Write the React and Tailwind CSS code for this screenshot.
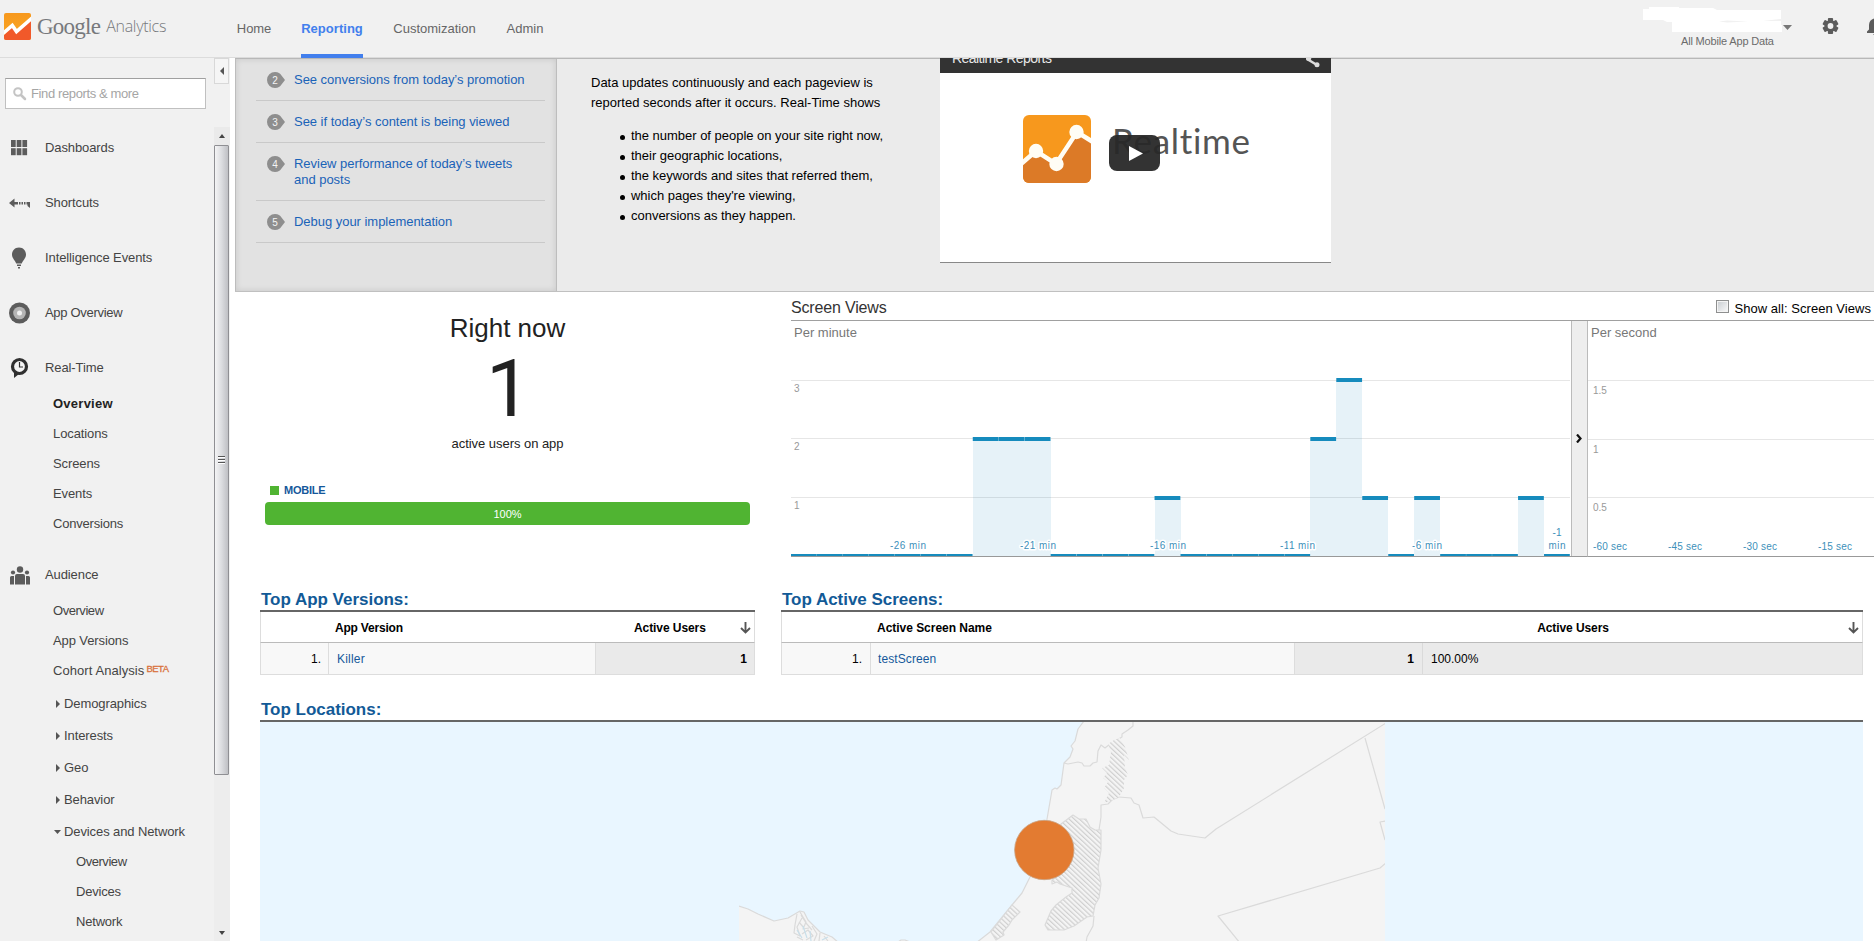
import React from "react";

const TOP_NAV = [
  { label: "Home", cls: "ml-[237px] w-[34px] text-[#666] tracking-[-0.1px]" },
  { label: "Reporting", cls: "ml-[30px] w-[62px] font-bold text-[#427fed] border-b-4 border-[#427fed] pt-1 tracking-[0.03px]" },
  { label: "Customization", cls: "ml-[30px] w-[83px] text-[#666]" },
  { label: "Admin", cls: "ml-[30px] w-[38px] text-[#666]" },
];

const STEPS = [
  { n: 2, text: "See conversions from today’s promotion" },
  { n: 3, text: "See if today’s content is being viewed" },
  { n: 4, text: "Review performance of today’s tweets and posts" },
  { n: 5, text: "Debug your implementation" },
];

const FACTS = [
  "the number of people on your site right now,",
  "their geographic locations,",
  "the keywords and sites that referred them,",
  "which pages they're viewing,",
  "conversions as they happen.",
];

const VIEWS = [0, 0, 0, 0, 0, 0, 0, 2, 2, 2, 0, 0, 0, 0, 1, 0, 0, 0, 0, 0, 2, 3, 1, 0, 1, 0, 0, 0, 1, 0];

function AnalyticsLogo() {
  return (
    <svg width="27" height="27" viewBox="0 0 27 27" className="shrink-0">
      <defs>
        <linearGradient id="lo" x1="0" y1="0" x2="0" y2="1">
          <stop offset="0" stopColor="#f7981d" />
          <stop offset="1" stopColor="#f9a825" />
        </linearGradient>
        <clipPath id="lc"><rect width="27" height="27" rx="2" /></clipPath>
      </defs>
      <g clipPath="url(#lc)">
        <rect width="27" height="27" fill="url(#lo)" />
        <path d="M0 22 L8.500 14 L12.500 19 L27 7 V27 H0Z" fill="#f1592a" />
        <path d="M-1 20.500 L8.300 12.500 L12.500 18.500 L28 5" fill="none" stroke="#fff" strokeWidth="3.600" />
      </g>
    </svg>
  );
}

function Header() {
  return (
    <header className="flex h-[58px] shrink-0 border-b border-[#dcdcdc] bg-[#f1f1f1]">
      <div className="flex h-[54px] w-0 items-start pt-[10px]">
        <div className="flex h-[32px] w-[200px] shrink-0 items-center pl-1">
          <AnalyticsLogo />
          <span className="ml-[6px] font-['Liberation_Serif',serif] text-[23px] leading-[27px] tracking-[-0.75px] text-[#77797c]">Google</span>
          <span className="ml-[6px] pt-px font-['Open_Sans',sans-serif] text-[16px] font-light leading-[27px] tracking-[-0.3px] text-[#77797c]">Analytics</span>
        </div>
      </div>
      <nav className="flex h-[58px] text-[13px]">
        {TOP_NAV.map((t) => (
          <div key={t.label} className={"flex items-center justify-center whitespace-nowrap " + t.cls}>
            <span>{t.label}</span>
          </div>
        ))}
      </nav>
      <div className="ml-auto flex h-[57px] w-[231px]">
        <div className="w-[139px] pt-[7px]">
          <svg width="139" height="26" viewBox="0 0 139 26" className="block">
            <path d="M0 2H6V0H36V1H70L74 3H138V12L120 14H138V18H139V25H29V15H24L20 13H0Z" fill="#fff" />
            <path d="M76 14.5L84 13.5L105 14.5L84 15.5Z" fill="#f1f1f1" />
          </svg>
          <div className="whitespace-nowrap pl-[38px] text-[11px] leading-[16px] tracking-[-0.17px] text-[#6b6b6b]">All Mobile App Data</div>
        </div>
        <svg width="92" height="57" viewBox="0 0 92 57" className="shrink-0">
          <path d="M1 25H10L5.500 30Z" fill="#777" />
          <g transform="translate(48.500 26)" fill="#5c5c5c">
            {[0, 60, 120].map((r) => (
              <rect key={r} x="-2.600" y="-8" width="5.200" height="16" rx="1" transform={`rotate(${r})`} />
            ))}
            <circle r="6" />
            <circle r="2.900" fill="#f1f1f1" />
          </g>
          <path d="M85 33V31.500L87 29.500V25C87 21.500 89 19.500 92 18.500V33Z M91 34H92V35Z" fill="#5c5c5c" />
        </svg>
      </div>
    </header>
  );
}

const ICONS = {
  dash: (
    <g fill="#5c5c5c">
      {[0, 1, 2].map((c) => [0, 1].map((r) => <rect key={c + "-" + r} x={11 + c * 5.7} y={4 + r * 8.2} width="4.700" height="7" />))}
    </g>
  ),
  short: (
    <g fill="#5c5c5c">
      <path d="M9 12L14.500 7.500V11H18V13.500H14.500V16.500Z" />
      <path d="M19 11H20.500V13.500H19ZM21.500 11H23V13.500H21.500ZM24 11H25.500V13.500H24ZM26.500 11H30V17L27.500 15V13.500H26.500Z" />
    </g>
  ),
  bulb: (
    <g fill="#5c5c5c">
      <path d="M19 1.500C23.500 1.500 26 5 26 8.500C26 12.500 22.500 14.500 21.800 17.500H16.200C15.500 14.500 12 12.500 12 8.500C12 5 14.500 1.500 19 1.500Z" />
      <path d="M17 18.500H21V20H17ZM18 21H20V22.500H18Z" />
    </g>
  ),
  app: (
    <g>
      <circle cx="19.500" cy="12" r="10.500" fill="#5c5c5c" />
      <circle cx="19.500" cy="12" r="6.300" fill="#b5b5b5" />
      <circle cx="19.500" cy="12" r="2.500" fill="#f1f1f1" />
    </g>
  ),
  time: (
    <g>
      <path d="M14 15V22L19 18Z" fill="#303030" />
      <circle cx="19.500" cy="10.500" r="7" fill="#f5f5f5" stroke="#303030" strokeWidth="3.200" />
      <path d="M19.500 6V11H23" fill="none" stroke="#303030" strokeWidth="1.200" />
    </g>
  ),
  people: (
    <g fill="#5c5c5c">
      <circle cx="20" cy="6.500" r="3.200" /><circle cx="13" cy="9.500" r="2.100" /><circle cx="27" cy="9.500" r="2.100" />
      <path d="M15 21.500V13Q15 11 17 11H23Q25 11 25 13V21.500ZM10 21.500V14.500Q10 13 11.500 13H14V21.500ZM30 21.500V14.500Q30 13 28.500 13H26V21.500Z" />
    </g>
  ),
};

function MainItem({ icon, label }) {
  return (
    <div className="flex h-[41px] items-center">
      <svg width="45" height="24" viewBox="0 0 45 24" className="shrink-0">{ICONS[icon]}</svg>
      <span>{label}</span>
    </div>
  );
}

function Sub({ children, deep }) {
  return <div className={"flex h-[30px] items-center " + (deep ? "pl-[76px] tracking-[-0.2px]" : "pl-[53px]")}>{children}</div>;
}

function Branch({ label, open }) {
  return (
    <div className={"flex items-center pl-[54px] " + (open ? "h-[31px]" : "h-[32px]")}>
      <svg width="10" height="8" viewBox="0 0 10 8" className="shrink-0">
        {open ? <path d="M0 2H7L3.500 6Z" fill="#555" /> : <path d="M2 0V8L6 4Z" fill="#555" />}
      </svg>
      <span>{label}</span>
    </div>
  );
}

function Sidebar() {
  return (
    <aside className="flex w-[230px] shrink-0 bg-[#f1f1f1] text-[13px] text-[#444]">
      <div className="w-[214px] pt-[20px] tracking-[-0.1px]">
        <div className="ml-[5px] flex h-[31px] w-[201px] items-center border border-[#c0c0c0] border-t-[#a0a0a0] bg-white pl-[7px] text-[#a5a5a5]">
          <svg width="14" height="14" viewBox="0 0 14 14">
            <circle cx="5" cy="5" r="3.800" fill="none" stroke="#c4c4c4" strokeWidth="2" />
            <path d="M8 8L12 12" stroke="#c4c4c4" strokeWidth="2.500" strokeLinecap="round" />
          </svg>
          <span className="ml-[4px] tracking-[-0.38px]">Find reports &amp; more</span>
        </div>
        <div className="mt-[18px]"><MainItem icon="dash" label="Dashboards" /></div>
        <div className="mt-[14px]"><MainItem icon="short" label="Shortcuts" /></div>
        <div className="mt-[14px]"><MainItem icon="bulb" label="Intelligence Events" /></div>
        <div className="mt-[14px] tracking-[-0.3px]"><MainItem icon="app" label="App Overview" /></div>
        <div className="mb-px mt-[14px]"><MainItem icon="time" label="Real-Time" /></div>
        <Sub><b className="tracking-[0.25px] text-[#222]">Overview</b></Sub>
        <Sub>Locations</Sub>
        <Sub>Screens</Sub>
        <Sub>Events</Sub>
        <Sub><span className="tracking-[-0.2px]">Conversions</span></Sub>
        <div className="mb-px mt-[15px]"><MainItem icon="people" label="Audience" /></div>
        <Sub><span className="tracking-[-0.45px]">Overview</span></Sub>
        <Sub>App Versions</Sub>
        <Sub><span className="tracking-[0.07px]">Cohort Analysis</span><span className="ml-[2px] pb-[4px] text-[9.5px] leading-none tracking-[-0.5px] text-[#d9713c] [-webkit-text-stroke:0.3px]">BETA</span></Sub>
        <div className="h-[2px]" />
        <Branch label="Demographics" />
        <Branch label="Interests" />
        <Branch label="Geo" />
        <Branch label="Behavior" />
        <Branch label="Devices and Network" open />
        <Sub deep><span className="tracking-[-0.45px]">Overview</span></Sub>
        <Sub deep>Devices</Sub>
        <Sub deep>Network</Sub>
      </div>
      <div className="flex w-[16px] flex-col">
        <div className="flex h-[26px] w-[15px] items-center justify-center border border-[#d8d8d8] bg-[#f5f5f5]">
          <svg width="4" height="8" viewBox="0 0 4 8"><path d="M4 0V8L0 4Z" fill="#555" /></svg>
        </div>
        <div className="mt-[43px] flex h-[18px] items-center justify-center bg-[#eaeaea]">
          <svg width="6" height="4" viewBox="0 0 6 4"><path d="M0 4H6L3 0Z" fill="#444" /></svg>
        </div>
        <div className="flex h-[630px] w-[15px] flex-col items-center justify-center gap-px rounded-[1px] border border-[#8f8f93] bg-linear-to-r from-[#f4f4f5] via-[#dcdde0] to-[#bfc0c4]">
          {[0, 1, 2].map((i) => <span key={i} className="h-[2px] w-[7px] border-b border-white bg-[#555]" />)}
        </div>
        <div className="flex grow items-end justify-center bg-[#ededed] pb-[6px]">
          <svg width="6" height="4" viewBox="0 0 6 4"><path d="M0 0H6L3 4Z" fill="#444" /></svg>
        </div>
      </div>
    </aside>
  );
}

function Step({ n, text }) {
  return (
    <li className="flex border-b border-[#c9c9c9] pb-[12px] pl-[11px] pt-[13px] leading-[16px]">
      <span className="relative mr-[9px] h-[16px] w-[18px] shrink-0 text-center">
        <svg width="18" height="16" viewBox="0 0 18 16" className="absolute left-0 top-0">
          <path d="M8 0C11.500 0 13 1.500 14.500 3.500L18 8L14.500 12.500C13 14.500 11.500 16 8 16A8 8 0 0 1 8 0Z" fill="#8e8e8e" />
        </svg>
        <span className="relative block w-[16px] text-[10px] leading-[17px] text-[#f4f4f4]">{n}</span>
      </span>
      <span className="w-[235px] tracking-[-0.03px] text-[#1a63b8]">{text}</span>
    </li>
  );
}

function Video() {
  return (
    <div className="ml-auto mr-[543px] flex h-[205px] w-[391px] flex-col border-b border-[#888] bg-white">
      <div className="flex h-[15px] shrink-0 justify-between overflow-hidden bg-[#333] pl-[12px] pr-[11px] text-[14px] text-[#e8e8e8]">
        <span className="relative -top-[10px] leading-[20px] tracking-[-0.55px]">Realtime Reports</span>
        <svg width="14" height="10" viewBox="0 0 14 10">
          <path d="M1 1L11 7" stroke="#ddd" strokeWidth="2.500" />
          <circle cx="2.500" cy="0" r="2.800" fill="#ddd" /><circle cx="11" cy="6.700" r="2.500" fill="#ddd" />
        </svg>
      </div>
      <div className="relative flex pl-[83px] pt-[42px]">
        <svg width="68" height="68" viewBox="0 0 68 68" className="shrink-0">
          <defs><clipPath id="vc"><rect width="68" height="68" rx="6" /></clipPath></defs>
          <g clipPath="url(#vc)">
            <rect width="68" height="68" fill="#f7981d" />
            <path d="M0 47L13 36L33 49L54 17L68 26V68H0Z" fill="#dc7a27" />
            <path d="M-2 49L13 36L33 49L54 17L70 27" fill="none" stroke="#fffdf5" strokeWidth="4.500" />
            <g fill="#fffdf5"><circle cx="13" cy="36" r="7.200" /><circle cx="33.500" cy="49" r="7.200" /><circle cx="53.500" cy="17" r="7.200" /></g>
          </g>
        </svg>
        <span className="ml-[21px] mt-[1px] font-['Lato',sans-serif] text-[35px] leading-[48px] tracking-[0.7px] text-[#555]">Realtime</span>
        <div className="absolute left-[169px] top-[62px] flex h-[36px] w-[51px] items-center justify-center rounded-[8px] bg-[#282828]/95">
          <svg width="14" height="15" viewBox="0 0 14 15" className="ml-[2px]"><path d="M0 0L14 7.500L0 15Z" fill="#fff" /></svg>
        </div>
      </div>
    </div>
  );
}

function Intro() {
  return (
    <section className="ml-[5px] flex h-[234px] shrink-0 border-b border-t border-b-[#c0c0c0] border-t-[#b8b8b8] bg-[#ebebeb] text-[13px]">
      <div className="w-[322px] shrink-0 border-x border-[#bdbdbd] bg-[#e2e2e2] pl-[20px] pr-[11px] shadow-[inset_0_0_6px_rgba(0,0,0,0.12)]">
        <ul>{STEPS.map((s) => <Step key={s.n} {...s} />)}</ul>
      </div>
      <div className="ml-[34px] w-[320px] shrink-0 pt-[14px] leading-[20px] text-black">
        <p className="whitespace-nowrap">Data updates continuously and each pageview is<br />reported seconds after it occurs. Real-Time shows</p>
        <ul className="mt-[13px] tracking-[-0.02px]">
          {FACTS.map((f) => (
            <li key={f} className="flex items-center whitespace-nowrap pl-[29px]">
              <span className="mr-[6px] mt-[2px] h-[5px] w-[5px] rounded-full bg-black" />{f}
            </li>
          ))}
        </ul>
      </div>
      <div className="-mt-px flex grow"><Video /></div>
    </section>
  );
}

function RightNow() {
  return (
    <div className="w-[561px] shrink-0">
      <div className="ml-[35px] flex w-[485px] flex-col pt-[20px] text-[#222]">
        <div className="text-center text-[26px] leading-[32px]">Right now</div>
        <div className="mt-[2px] pl-[2px] text-center font-['Roboto',sans-serif] text-[80px] leading-[86px]">1</div>
        <div className="mt-[2px] text-center text-[13px] leading-[20px] tracking-[-0.04px]">active users on app</div>
        <div className="mt-[27px] flex h-[18px] items-center pl-[5px] text-[11px] font-bold text-[#15589b]">
          <span className="mr-[5px] h-[9px] w-[9px] bg-[#50b432]" /><span className="tracking-[-0.25px]">MOBILE</span>
        </div>
        <div className="mt-[3px] flex h-[23px] items-center justify-center rounded-[4px] bg-[#50b432] pt-px text-[11px] text-white">100%</div>
      </div>
    </div>
  );
}

function MinuteChart() {
  const step = 779 / 30;
  const y = (v) => 235 - v * 58.700;
  return (
    <svg width="781" height="236" viewBox="0 0 781 236" className="shrink-0 font-['Liberation_Sans',Arial,sans-serif]">
      {[59, 117, 176].map((v) => <rect key={v} x="0" y={v} width="779" height="1" fill="#e6e6e6" />)}
      {VIEWS.map((v, i) => v > 0 && <rect key={i} x={i * step} y={y(v)} width={step} height={235 - y(v)} fill="#1a8bbd" fillOpacity="0.110" shapeRendering="crispEdges" />)}
      {VIEWS.map((v, i) => (
        <rect key={i} x={i * step} y={v ? Math.floor(y(v)) - 1 : 233} width={step - 0.2} height={v ? 4 : 2} fill="#168bbd" />
      ))}
      <rect x="0" y="235" width="781" height="1" fill="#999" />
      <g fontSize="10" fill="#999">
        <text x="3" y="71">3</text><text x="3" y="129">2</text><text x="3" y="188">1</text>
      </g>
      <g fontSize="10" fill="#3d8fba" textAnchor="middle" stroke="#fff" strokeWidth="3" paintOrder="stroke" strokeLinejoin="round">
        <text x="117" y="228" textLength="36">-26 min</text>
        <text x="247" y="228" textLength="36">-21 min</text>
        <text x="377" y="228" textLength="36">-16 min</text>
        <text x="506.500" y="228" textLength="35">-11 min</text>
        <text x="636" y="228" textLength="30">-6 min</text>
        <text x="766" y="215">-1</text>
        <text x="766" y="228" textLength="17">min</text>
      </g>
    </svg>
  );
}

function SecondChart() {
  return (
    <svg width="286" height="236" viewBox="0 0 286 236" className="shrink-0 font-['Liberation_Sans',Arial,sans-serif]">
      {[59, 118, 176].map((v) => <rect key={v} x="0" y={v} width="286" height="1" fill="#e6e6e6" />)}
      <rect x="0" y="235" width="286" height="1" fill="#999" />
      <g fontSize="10" fill="#999">
        <text x="5" y="73">1.5</text><text x="5" y="132">1</text><text x="5" y="190">0.5</text>
      </g>
      <g fontSize="10" fill="#3d8fba">
        <text x="5" y="229" textLength="34">-60 sec</text>
        <text x="80" y="229" textLength="34">-45 sec</text>
        <text x="155" y="229" textLength="34">-30 sec</text>
        <text x="230" y="229" textLength="34">-15 sec</text>
      </g>
    </svg>
  );
}

function ScreenViews() {
  return (
    <div className="w-[1083px] shrink-0 overflow-hidden">
      <div className="flex h-[29px] items-center border-b border-[#a0a0a0]">
        <span className="pt-[4px] text-[16px] tracking-[-0.17px] text-[#333]">Screen Views</span>
        <span className="ml-auto mr-[6px] mt-px h-[13px] w-[13px] border border-[#8e8f8f] bg-linear-to-br from-[#c8ccd0] to-[#fafafa] shadow-[inset_0_0_0_1px_#f4f4f4]" />
        <span className="mr-[3px] mt-[6px] whitespace-nowrap text-[13px] tracking-[0.04px] text-black">Show all: Screen Views</span>
      </div>
      <div className="flex h-[236px] text-[13px] leading-[16px] text-[#777]">
        <div className="relative w-[781px]">
          <MinuteChart />
          <span className="absolute left-[3px] top-[4px]">Per minute</span>
        </div>
        <div className="-ml-px flex w-[17px] items-center justify-center border-x border-b border-[#bbb] border-b-[#999] bg-[#eee]">
          <svg width="6" height="9" viewBox="0 0 6 9" className="mr-px"><path d="M1 0.500L4.500 4.500L1 8.500" fill="none" stroke="#111" strokeWidth="2.200" /></svg>
        </div>
        <div className="relative w-[286px]">
          <SecondChart />
          <span className="absolute left-[3px] top-[4px]">Per second</span>
        </div>
      </div>
    </div>
  );
}

function DownArrow() {
  return (
    <svg width="11" height="12" viewBox="0 0 11 12" className="shrink-0">
      <path d="M5.500 0V10.500M1 6L5.500 10.500L10 6" fill="none" stroke="#555" strokeWidth="1.900" />
    </svg>
  );
}

function Title({ children }) {
  return <h2 className="h-[20px] whitespace-nowrap pl-[1px] text-[17px] font-bold leading-[20px] tracking-[-0.02px] text-[#125a97]">{children}</h2>;
}

function Tables() {
  return (
    <div className="ml-[30px] mt-[33px] flex shrink-0 text-[12px] text-black">
      <div className="w-[495px]">
        <Title>Top App Versions:</Title>
        <div className="border-t-2 border-[#666]">
          <div className="flex h-[31px] items-center border-x border-b border-x-[#ddd] border-b-[#bbb] pt-px font-bold">
            <span className="w-[299px] pl-[74px] tracking-[-0.2px]">App Version</span>
            <span className="grow pl-[74px] tracking-[-0.08px]">Active Users</span>
            <span className="mr-[3px]"><DownArrow /></span>
          </div>
          <div className="flex h-[32px] border border-t-0 border-[#ddd] bg-[#f8f8f8] leading-[32px]">
            <span className="w-[68px] border-r border-[#ddd] pr-[7px] text-right">1.</span>
            <span className="w-[267px] border-r border-[#ddd] pl-[8px] tracking-[0.2px] text-[#15589b]">Killer</span>
            <b className="grow bg-[#eaeaea] pr-[7px] text-right">1</b>
          </div>
        </div>
      </div>
      <div className="ml-[26px] w-[1082px]">
        <Title>Top Active Screens:</Title>
        <div className="border-t-2 border-[#666]">
          <div className="flex h-[31px] items-center border-x border-b border-x-[#ddd] border-b-[#bbb] pt-px font-bold">
            <span className="w-[512px] pl-[95px] tracking-[-0.03px]">Active Screen Name</span>
            <span className="grow pl-[4px] text-center tracking-[-0.08px]">Active Users</span>
            <span className="mr-[3px]"><DownArrow /></span>
          </div>
          <div className="flex h-[32px] border border-t-0 border-[#ddd] bg-[#eaeaea] leading-[32px]">
            <span className="w-[89px] border-r border-[#ddd] bg-[#f8f8f8] pr-[8px] text-right">1.</span>
            <span className="w-[424px] border-r border-[#ddd] bg-[#f8f8f8] pl-[7px] tracking-[0.1px] text-[#15589b]">testScreen</span>
            <b className="w-[128px] border-r border-[#dadada] pr-[8px] text-right">1</b>
            <span className="pl-[8px]">100.00%</span>
          </div>
        </div>
      </div>
    </div>
  );
}

function Locations() {
  return (
    <div className="ml-[30px] mt-[25px] w-[1603px] shrink-0">
      <Title>Top Locations:</Title>
      <div className="border-t-2 border-[#666] bg-[#e9f6ff]">
        <svg width="1603" height="220" viewBox="260 722 1603 220" className="block">
          <defs>
            <pattern id="hatch" width="3.500" height="3.500" patternUnits="userSpaceOnUse" patternTransform="rotate(-47)">
              <rect width="3.500" height="3.500" fill="#f4f4f4" /><rect width="1.200" height="3.500" fill="#cfcfcf" />
            </pattern>
            <clipPath id="land"><rect x="739" y="722" width="646" height="220" /></clipPath>
          </defs>
          <g clipPath="url(#land)" stroke="#dadada" strokeWidth="1.200" strokeLinejoin="round" fill="none">
            <path fill="#f4f4f4" d="M1084 721L1078 729L1075 741L1071 746L1073 749L1070 757L1064 763L1061 785L1057 789L1055 788L1052 790L1046 825L1038 860L1030 877L1022 893L1012 905L990 932L976 943H1390V720Z" />
            <path fill="#f4f4f4" d="M735 904L739 906L748 909L758 914L774 921L788 918L800 911L804 912L808 920L820 932L832 937L839 943H735Z" />
            <path fill="#f4f4f4" d="M898 942L901 940H905L910 942" />
            <path d="M1064 763L1068 764L1078 762L1082 763L1084 766L1090 766L1093 763L1097 762L1098 751L1101 745L1105 748L1110 744L1115 741L1122 737L1122 734L1128 730L1133 726V721" />
            <path d="M1119 797L1131 798L1134 803L1139 805L1143 818L1154 817L1171 831L1178 834L1205 838L1216 829L1386 723" />
            <path d="M1119 797L1112 800L1108 804L1101 805L1101 817L1099 830M1094 916L1093 926L1087 937L1086 943" />
            <path d="M1365 738L1385 809M1386 821L1380 822L1385 840M1386 863L1380 868L1218 916L1240 943" />
            <path d="M797 914L795 925L794 933L800 936L797 927L802 918M800 912L806 922L803 929L809 928M802 934L808 930L813 936L806 940M797 937L803 940M812 926L817 934L814 941M820 933L819 941M824 936L828 941M799 922L804 928M801 915L806 923L812 930" />
            <path stroke="#c8dfeb" d="M803 926L807 938M810 931L811 941M797 930L802 938M822 940L828 937" />
            <g fill="url(#hatch)">
              <path stroke="none" d="M1108 744L1114 740L1120 738L1125 747L1129 760L1124 755L1125 768L1128 775L1124 780L1124 788L1119 797L1110 801L1104 803L1107 797L1109 793L1104 788L1108 782L1103 778L1107 773L1102 768L1109 765L1111 752Z" />
              <path d="M1061 824L1069 818L1073 815L1079 819L1086 819L1090 827L1095 830L1101 830L1101 850L1098 868L1101 884L1099 898L1095 905L1093 916L1087 917L1074 926L1064 930L1048 930L1045 925L1051 911L1056 905L1066 897L1072 893V888L1060 884L1057 882L1052 884V880L1057 877Z" />
              <path d="M1012 905L1020 912L1012 920L1009 925L1003 932L1004 935L996 940L991 932Z" />
            </g>
          </g>
          <circle cx="1044.300" cy="850" r="29.700" fill="#e37b31" stroke="#c9a385" strokeWidth="0.800" />
        </svg>
      </div>
    </div>
  );
}

export default function App() {
  return (
    <div className="flex h-[941px] w-[1874px] flex-col overflow-hidden bg-white font-['Liberation_Sans',Arial,sans-serif] leading-normal">
      <Header />
      <div className="flex h-[883px] overflow-hidden">
        <Sidebar />
        <main className="flex w-[1644px] flex-col">
          <Intro />
          <div className="flex h-[265px] shrink-0">
            <RightNow />
            <ScreenViews />
          </div>
          <Tables />
          <Locations />
        </main>
      </div>
    </div>
  );
}
